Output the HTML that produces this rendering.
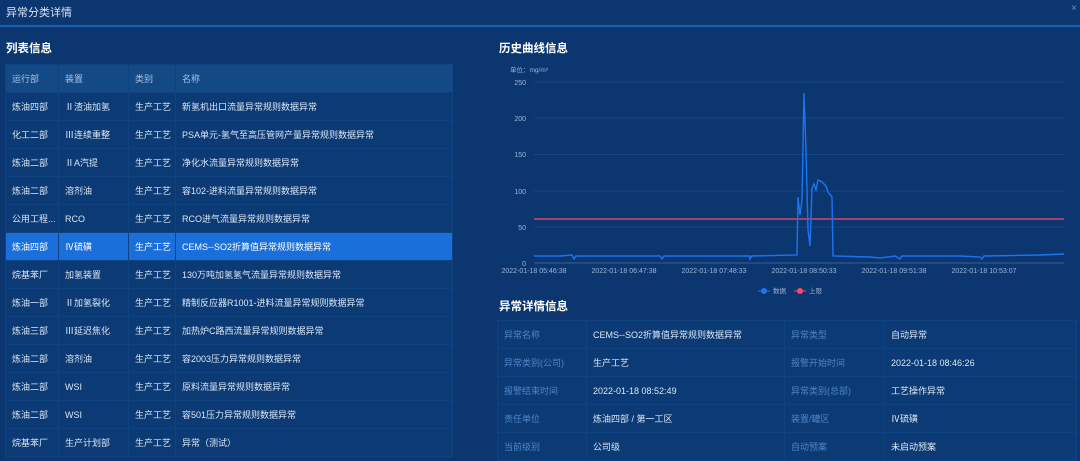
<!DOCTYPE html>
<html><head><meta charset="utf-8"><style>
*{margin:0;padding:0;box-sizing:border-box}
body{width:1080px;height:452px;overflow:hidden;background:#0b3670;font-family:"Liberation Sans","Noto Sans CJK SC",sans-serif;color:#dbe6f5;position:relative}
.hdr{position:absolute;left:0;top:0;width:1080px;height:27px;background:#0b3670;border-bottom:2px solid #1a5fae;font-size:11px;line-height:26px;padding-left:6px;color:#d8e4f3}
.x{position:absolute;right:3px;top:4px;font-size:10px;color:#6d8fbf;line-height:10px}
.sec{position:absolute;font-size:11.5px;font-weight:bold;color:#fff}
table{border-collapse:collapse;position:absolute;font-size:9px}
td{height:28px;border:1px solid #0f4280;padding-left:6px;white-space:nowrap;overflow:hidden}
.lt{left:5px;top:64px;width:448px}
.lt tr{background:#0c3a74}
.lt tr.h{background:#134a86;color:#a9c3e6}
.lt tr.s{background:#1a6fdb;color:#fff}
.rt{left:497px;top:320px;width:580px}
.rt td{background:#0c3a74}
.rt td.l{color:#4d86c8}
</style></head><body>
<div class="hdr">异常分类详情<span class="x">×</span></div>
<div class="sec" style="left:6px;top:40px">列表信息</div>
<table class="lt">
<colgroup><col style="width:53px"><col style="width:70px"><col style="width:47px"><col></colgroup>
<tr class="h"><td>运行部</td><td>装置</td><td>类别</td><td>名称</td></tr>
<tr><td>炼油四部</td><td>Ⅱ渣油加氢</td><td>生产工艺</td><td>新氢机出口流量异常规则数据异常</td></tr>
<tr><td>化工二部</td><td>Ⅲ连续重整</td><td>生产工艺</td><td>PSA单元-氢气至高压管网产量异常规则数据异常</td></tr>
<tr><td>炼油二部</td><td>ⅡA汽提</td><td>生产工艺</td><td>净化水流量异常规则数据异常</td></tr>
<tr><td>炼油二部</td><td>溶剂油</td><td>生产工艺</td><td>容102-进料流量异常规则数据异常</td></tr>
<tr><td>公用工程...</td><td>RCO</td><td>生产工艺</td><td>RCO进气流量异常规则数据异常</td></tr>
<tr class="s"><td>炼油四部</td><td>Ⅳ硫磺</td><td>生产工艺</td><td>CEMS--SO2折算值异常规则数据异常</td></tr>
<tr><td>烷基苯厂</td><td>加氢装置</td><td>生产工艺</td><td>130万吨加氢氢气流量异常规则数据异常</td></tr>
<tr><td>炼油一部</td><td>Ⅱ加氢裂化</td><td>生产工艺</td><td>精制反应器R1001-进料流量异常规则数据异常</td></tr>
<tr><td>炼油三部</td><td>Ⅲ延迟焦化</td><td>生产工艺</td><td>加热炉C路西流量异常规则数据异常</td></tr>
<tr><td>炼油二部</td><td>溶剂油</td><td>生产工艺</td><td>容2003压力异常规则数据异常</td></tr>
<tr><td>炼油二部</td><td>WSI</td><td>生产工艺</td><td>原料流量异常规则数据异常</td></tr>
<tr><td>炼油二部</td><td>WSI</td><td>生产工艺</td><td>容501压力异常规则数据异常</td></tr>
<tr><td>烷基苯厂</td><td>生产计划部</td><td>生产工艺</td><td>异常（测试）</td></tr>
</table>
<div class="sec" style="left:499px;top:40px">历史曲线信息</div>
<svg style="position:absolute;left:0;top:0" width="1080" height="452" font-family="Liberation Sans" font-size="7" fill="#9db5d6">
<text x="510" y="72" font-size="6.5">单位：mg/m³</text>
<g stroke="#1e4c85" stroke-width="0.7">
<line x1="534" x2="1064" y1="82" y2="82"/><line x1="534" x2="1064" y1="118" y2="118"/><line x1="534" x2="1064" y1="154.5" y2="154.5"/><line x1="534" x2="1064" y1="191" y2="191"/><line x1="534" x2="1064" y1="227" y2="227"/><line x1="534" x2="1064" y1="263" y2="263" stroke="#4a6f9c"/></g>
<g text-anchor="end"><text x="526" y="85">250</text><text x="526" y="121">200</text><text x="526" y="157">150</text><text x="526" y="194">100</text><text x="526" y="230">50</text><text x="526" y="266">0</text></g>
<g text-anchor="middle"><text x="534" y="273">2022-01-18 05:46:38</text><text x="624" y="273">2022-01-18 06:47:38</text><text x="714" y="273">2022-01-18 07:48:33</text><text x="804" y="273">2022-01-18 08:50:33</text><text x="894" y="273">2022-01-18 09:51:38</text><text x="984" y="273">2022-01-18 10:53:07</text></g>
<line x1="534" x2="1064" y1="219" y2="219" stroke="#ff4a6e" stroke-width="1.2"/>
<polyline fill="none" stroke="#1f73f0" stroke-width="1.4" points="534,256 560,256 572,255 574,259 576,256 600,256 660,256 662,259 664,256 700,256 750,256 750,259 752,256 797,255 798,197 800,215 802,200 804,93 806,150 808,230 810,246 812,188 814,184 816,190 818,180 822,182 826,186 828,192 832,197 833,256 870,257 880,258 895,256 900,259 902,256 960,256 980,257 982,259 984,256 1040,255 1064,254"/>
<line x1="758" x2="770" y1="291" y2="291" stroke="#1f73f0"/><circle cx="764" cy="291" r="3" fill="#1f73f0"/>
<text x="773" y="293" font-size="6.5">数据</text>
<line x1="794" x2="806" y1="291" y2="291" stroke="#ff4a6e"/><circle cx="800" cy="291" r="3" fill="#ff4a6e"/>
<text x="809" y="293" font-size="6.5">上限</text>
</svg>
<div class="sec" style="left:499px;top:298px">异常详情信息</div>
<table class="rt">
<colgroup><col style="width:89px"><col style="width:198px"><col style="width:100px"><col></colgroup>
<tr><td class="l">异常名称</td><td>CEMS--SO2折算值异常规则数据异常</td><td class="l">异常类型</td><td>自动异常</td></tr>
<tr><td class="l">异常类别(公司)</td><td>生产工艺</td><td class="l">报警开始时间</td><td>2022-01-18 08:46:26</td></tr>
<tr><td class="l">报警结束时间</td><td>2022-01-18 08:52:49</td><td class="l">异常类别(总部)</td><td>工艺操作异常</td></tr>
<tr><td class="l">责任单位</td><td>炼油四部 / 第一工区</td><td class="l">装置/罐区</td><td>Ⅳ硫磺</td></tr>
<tr><td class="l">当前级别</td><td>公司级</td><td class="l">自动预案</td><td>未启动预案</td></tr>
</table>
</body></html>
